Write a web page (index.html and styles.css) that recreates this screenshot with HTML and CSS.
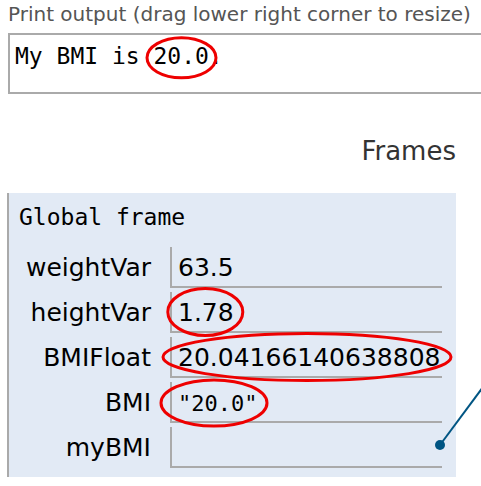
FILE: index.html
```html
<!DOCTYPE html>
<html>
<head>
<meta charset="utf-8">
<link rel="stylesheet" href="styles.css">
</head>
<body>
<div class="page">
  <div class="out-label">Print output (drag lower right corner to resize)</div>
  <div class="out-box"><pre class="out-text">My BMI is 20.0.</pre></div>

  <div class="stack">
    <div class="stack-header">Frames</div>
    <div class="frame">
      <div class="frame-title">Global frame</div>
      <div class="vars">
        <div class="vname">weightVar</div>
        <div class="vval">63.5</div>
        <div class="vname">heightVar</div>
        <div class="vval">1.78</div>
        <div class="vname">BMIFloat</div>
        <div class="vval">20.04166140638808</div>
        <div class="vname">BMI</div>
        <div class="vval"><span class="str">"20.0"</span></div>
        <div class="vname">myBMI</div>
        <div class="vval"></div>
      </div>
    </div>
  </div>
</div>

<svg class="marks" width="481" height="486" viewBox="0 0 481 486" xmlns="http://www.w3.org/2000/svg">
  <line x1="440" y1="445" x2="486" y2="383" stroke="#005583" stroke-width="2"/>
  <circle cx="440" cy="445" r="5" fill="#005583"/>
  <g fill="none" stroke="#ee0000" stroke-width="3">
    <ellipse cx="181.5" cy="57.8" rx="34.5" ry="20"/>
    <ellipse cx="205.3" cy="312" rx="37.5" ry="23.5"/>
    <ellipse cx="307" cy="357" rx="144" ry="23.5"/>
    <ellipse cx="214" cy="403" rx="53" ry="23"/>
  </g>
</svg>
</body>
</html>
```

FILE: styles.css
```css
html, body {
  margin: 0;
  padding: 0;
  overflow: hidden;
  background: #ffffff;
}

.page {
  padding-top: 3px;
  width: 481px;
}

.out-label {
  margin-left: 8px;
  font-family: "DejaVu Sans", Verdana, sans-serif;
  font-size: 20px;
  line-height: 23px;
  color: #555555;
  white-space: nowrap;
}

.out-box {
  box-sizing: border-box;
  margin-top: 7px;
  margin-left: 8px;
  width: 473px;
  height: 61px;
  border: 2px solid #aaaaaa;
  border-right: none;
  padding: 8px 0 0 5px;
  background: #ffffff;
}

.out-text {
  margin: 0;
  font-family: "DejaVu Sans Mono", monospace;
  font-size: 23px;
  line-height: 27px;
  color: #000000;
}

.stack {
  margin-left: 7px;
  width: 449px;
}

.stack-header {
  margin-top: 42px;
  height: 30px;
  font-family: "DejaVu Sans", Verdana, sans-serif;
  font-size: 26px;
  line-height: 30px;
  color: #333333;
  text-align: right;
}

.frame {
  margin-top: 27px;
  border-left: 2px solid #aaaaaa;
  background: #e2eaf5;
  padding: 11px 0 9px 0;
}

.frame-title {
  padding-left: 10px;
  font-family: "DejaVu Sans Mono", monospace;
  font-size: 23px;
  line-height: 27px;
  color: #000000;
}

.vars {
  margin-top: 16px;
  display: grid;
  grid-template-columns: 142px 272px;
  column-gap: 19px;
  row-gap: 4px;
  font-family: "DejaVu Sans", Verdana, sans-serif;
  font-size: 25px;
  color: #000000;
}

.vname {
  text-align: right;
  padding-top: 3px;
  line-height: 36px;
  white-space: nowrap;
}

.vval {
  box-sizing: border-box;
  height: 41px;
  border-left: 2px solid #aaaaaa;
  border-bottom: 2px solid #aaaaaa;
  padding: 3px 0 0 6px;
  line-height: 36px;
  white-space: nowrap;
}

.str {
  font-family: "DejaVu Sans Mono", monospace;
  font-size: 22px;
}

.marks {
  position: absolute;
  top: 0;
  left: 0;
  pointer-events: none;
}
```
